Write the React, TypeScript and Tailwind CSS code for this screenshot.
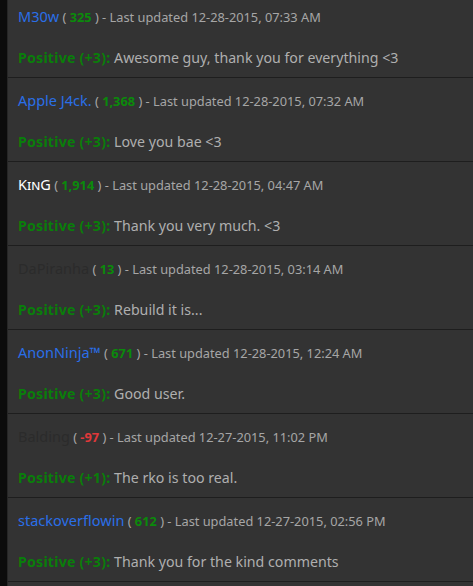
import React from "react";

type Rep = {
  name: string;
  nameClass: string;
  score: string;
  scoreClass?: string;
  updated: string;
  rating: string;
  comment: string;
};

const reps: Rep[] = [
  { name: "M30w", nameClass: "text-[#2a6fe8]", score: "325", updated: "12-28-2015, 07:33 AM", rating: "+3", comment: "Awesome guy, thank you for everything <3" },
  { name: "Apple J4ck.", nameClass: "text-[#2a6fe8]", score: "1,368", updated: "12-28-2015, 07:32 AM", rating: "+3", comment: "Love you bae <3" },
  { name: "KinG", nameClass: "text-white [font-variant:small-caps]", score: "1,914", updated: "12-28-2015, 04:47 AM", rating: "+3", comment: "Thank you very much. <3" },
  { name: "DaPiranha", nameClass: "text-[#2b2b2b]", score: "13", updated: "12-28-2015, 03:14 AM", rating: "+3", comment: "Rebuild it is..." },
  { name: "AnonNinja™", nameClass: "text-[#2a6fe8]", score: "671", updated: "12-28-2015, 12:24 AM", rating: "+3", comment: "Good user." },
  { name: "Balding", nameClass: "text-[#2b2b2b]", score: "-97", scoreClass: "text-[#e0383a]", updated: "12-27-2015, 11:02 PM", rating: "+1", comment: "The rko is too real." },
  { name: "stackoverflowin", nameClass: "text-[#2a6fe8]", score: "612", updated: "12-27-2015, 02:56 PM", rating: "+3", comment: "Thank you for the kind comments" },
];

const Row = ({ rep, first }: { rep: Rep; first: boolean }) => (
  <div
    className={`flex flex-col border-b border-[#1e1e1e] px-[10px] ${
      first ? "h-[78px] pt-[7px]" : "h-[84px] pt-[13px]"
    }`}
  >
    <div className="text-[12.8px] leading-[18px] text-[#a6a6a6] whitespace-nowrap">
      <span className={`text-[14.5px] ${rep.nameClass}`}>{rep.name}</span>{" "}
      ( <span className={`font-bold ${rep.scoreClass ?? "text-[#0b8a0b]"}`}>{rep.score}</span> ) - Last updated {rep.updated}
    </div>
    <div className="mt-[22px] text-[14.2px] leading-[20px] text-[#afafaf] whitespace-nowrap">
      <span className="font-bold tracking-[0.2px] text-[#0a7e0a]">Positive ({rep.rating}):</span> {rep.comment}
    </div>
  </div>
);

export default function App() {
  return (
    <div className="flex h-[586px] w-[473px] overflow-hidden bg-[#333333] font-['Noto_Sans',sans-serif]">
      <div className="w-[7px] shrink-0 bg-[#0c0c0c]" />
      <div className="flex-1 border-l border-[#262626]">
        {reps.map((r, i) => (
          <Row key={r.name} rep={r} first={i === 0} />
        ))}
      </div>
    </div>
  );
}
